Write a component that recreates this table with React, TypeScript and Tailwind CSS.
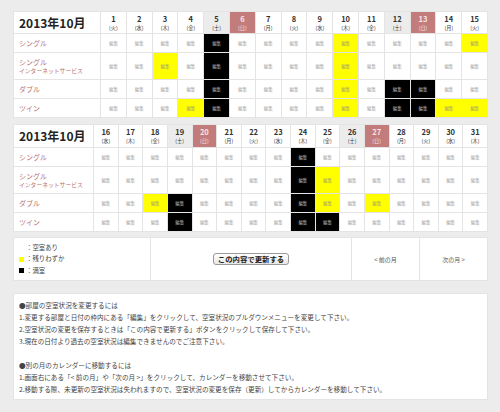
import React from "react"

type State = "" | "Y" | "B"

const WEEK = ["日", "月", "火", "水", "木", "金", "土"]
const ROWS = ["シングル", "シングルネット", "ダブル", "ツイン"]

// 2013-10-01 is a Tuesday
const weekday = (d: number) => (d + 1) % 7

const states1: Record<string, Record<number, State>> = {
  シングル: { 5: "B", 10: "Y", 15: "Y" },
  シングルネット: { 3: "Y", 5: "B", 10: "Y" },
  ダブル: { 5: "B", 10: "Y", 12: "B", 13: "B" },
  ツイン: { 4: "Y", 5: "B", 10: "Y", 12: "B", 13: "B", 14: "Y", 15: "Y" },
}

const states2: Record<string, Record<number, State>> = {
  シングル: { 24: "B" },
  シングルネット: { 24: "B", 25: "Y" },
  ダブル: { 18: "Y", 19: "B", 24: "B", 25: "Y", 27: "Y" },
  ツイン: { 19: "B", 24: "B", 25: "B" },
}

function RowLabel({ row }: { row: string }) {
  if (row === "シングルネット") {
    return (
      <div className="bg-white flex flex-col justify-center pl-[5px] text-[#b86f6f]">
        <span className="text-[7px] leading-[9px]">シングル</span>
        <span className="text-[5.8px] leading-[8px]">インターネットサービス</span>
      </div>
    )
  }
  return (
    <div className="bg-white flex items-center pl-[5px] text-[7px] text-[#b86f6f]">{row}</div>
  )
}

function Cell({ state }: { state: State }) {
  const cls =
    state === "B"
      ? "bg-black text-[#b5b5b5]"
      : state === "Y"
        ? "bg-[#ffff00] text-[#a3a36a]"
        : "bg-white text-[#a5a5a5]"
  return <div className={`${cls} flex items-center justify-center text-[4.4px]`}>編集</div>
}

function DayHead({ d }: { d: number }) {
  const w = weekday(d)
  const cls = w === 0 ? "bg-[#c27c7c] text-[#f6e4e4]" : w === 6 ? "bg-[#ececec] text-[#333]" : "bg-white text-[#333]"
  return (
    <div className={`${cls} flex flex-col items-center justify-center`}>
      <span className="text-[7.5px] leading-[8px] font-semibold">{d}</span>
      <span className="text-[5.2px] leading-[7px] mt-px">({WEEK[w]})</span>
    </div>
  )
}

function MonthTable({
  days,
  states,
  cols,
  rows,
}: {
  days: number[]
  states: Record<string, Record<number, State>>
  cols: string
  rows: string
}) {
  return (
    <div className={`grid ${cols} ${rows} gap-px bg-[#e4e4e4] border border-[#e4e4e4]`}>
      <div className="bg-white flex items-center pl-[5px] text-[12px] font-bold text-[#222]">2013年10月</div>
      {days.map((d) => (
        <DayHead key={d} d={d} />
      ))}
      {ROWS.map((r) => (
        <React.Fragment key={r}>
          <RowLabel row={r} />
          {days.map((d) => (
            <Cell key={d} state={states[r][d] ?? ""} />
          ))}
        </React.Fragment>
      ))}
    </div>
  )
}

export default function App() {
  const days1 = Array.from({ length: 15 }, (_, i) => i + 1)
  const days2 = Array.from({ length: 16 }, (_, i) => i + 16)

  return (
    <div className="w-[500px] h-[412px] bg-[#ececec] pt-[11px] pl-[13px] pr-[12px] font-['Noto_Sans_CJK_JP',sans-serif] overflow-hidden">
      <MonthTable
        days={days1}
        states={states1}
        cols="grid-cols-[86px_repeat(15,minmax(0,1fr))]"
        rows="grid-rows-[21px_18px_26px_18px_18px]"
      />
      <div className="mt-[6px]">
        <MonthTable
          days={days2}
          states={states2}
          cols="grid-cols-[79px_repeat(16,minmax(0,1fr))]"
          rows="grid-rows-[22px_18px_26px_18px_18px]"
        />
      </div>

      <div className="mt-[5px] h-[44px] flex gap-px bg-[#e4e4e4] border border-[#e4e4e4]">
        <div className="w-[136px] bg-white flex flex-col justify-center pl-[5px] text-[6.4px] leading-[11.5px] text-[#444]">
          <div className="flex items-center">
            <span className="w-[5px] h-[5px] bg-white mr-[2px]" />
            ：空室あり
          </div>
          <div className="flex items-center">
            <span className="w-[5px] h-[5px] bg-[#ffff00] mr-[2px]" />
            ：残りわずか
          </div>
          <div className="flex items-center">
            <span className="w-[5px] h-[5px] bg-black mr-[2px]" />
            ：満室
          </div>
        </div>
        <div className="flex-1 bg-white flex items-center justify-center">
          <button className="h-[12px] px-[4px] rounded-[3px] border border-[#9a9a9a] bg-gradient-to-b from-white to-[#e8e8e8] text-[7.4px] leading-[10px] font-semibold text-[#222]">
            この内容で更新する
          </button>
        </div>
        <div className="w-[67px] bg-white flex items-center justify-center text-[6px] text-[#555]">&lt; 前の月</div>
        <div className="w-[67px] bg-white flex items-center justify-center text-[6px] text-[#555]">次の月 &gt;</div>
      </div>

      <div className="mt-[12px] bg-white border border-[#e4e4e4] pl-[5px] pt-[5px] pb-[4px] text-[6.6px] leading-[12px] text-[#444]">
        <p>●部屋の空室状況を変更するには</p>
        <p>1.変更する部屋と日付の枠内にある「編集」をクリックして、空室状況のプルダウンメニューを変更して下さい。</p>
        <p>2.空室状況の変更を保存するときは「この内容で更新する」ボタンをクリックして保存して下さい。</p>
        <p>3.現在の日付より過去の空室状況は編集できませんのでご注意下さい。</p>
        <p>&nbsp;</p>
        <p>●別の月のカレンダーに移動するには</p>
        <p>1.画面右にある「&lt; 前の月」や「次の月 &gt;」をクリックして、カレンダーを移動させて下さい。</p>
        <p>2.移動する際、未更新の空室状況は失われますので、空室状況の変更を保存（更新）してからカレンダーを移動して下さい。</p>
      </div>
    </div>
  )
}
